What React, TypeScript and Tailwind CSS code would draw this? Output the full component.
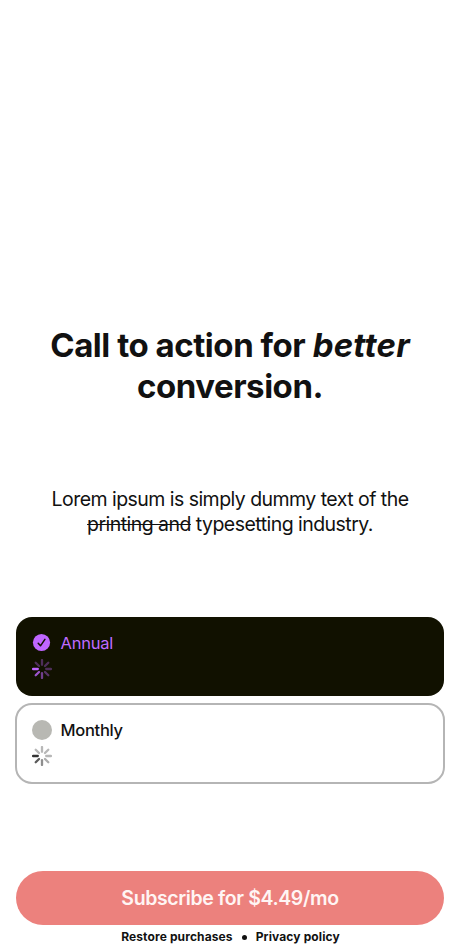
const rays = [0.35, 0.35, 0.35, 0.4, 0.55, 0.8, 1, 0.35];

function Spinner({ color }: { color: string }) {
  return (
    <svg width="20" height="20" viewBox="0 0 20 20" stroke={color} strokeWidth="2.3" strokeLinecap="round">
      {rays.map((o, i) => (
        <line key={i} x1="10" y1="1.1" x2="10" y2="5.8" opacity={o} transform={`rotate(${i * 45} 10 10)`} />
      ))}
    </svg>
  );
}

export default function App() {
  return (
    <main className="flex h-[950px] w-[460px] flex-col overflow-hidden bg-white px-4 font-['Inter',sans-serif] text-[#111]">
      <h1 className="mt-[325px] text-center text-[33px] leading-[41px] font-bold tracking-[-0.46px] whitespace-nowrap">
        Call to action for <em className="tracking-[0.2px]">better</em>
        <br />
        conversion.
      </h1>
      <p className="mt-[80px] text-center text-[19.5px] leading-[25px] tracking-[-0.54px] whitespace-nowrap">
        Lorem ipsum is simply dummy text of the
        <br />
        <s>printing and</s> typesetting industry.
      </p>
      <section className="mt-[80px] flex flex-col gap-[7px]">
        <div className="flex h-[79px] flex-col rounded-[16px] bg-[#111100] px-4 pt-4">
          <div className="flex h-5 items-center gap-[8.5px] text-[16.5px] tracking-[-0.25px] text-[#bf6bff]">
            <svg width="20" height="20" viewBox="0 0 20 20" fill="none">
              <circle cx="9.5" cy="9.5" r="8.6" fill="#bf66ff" />
              <path d="M6.2 10.2l2.3 2.6 4.4-6.4" stroke="#111100" strokeWidth="1.5" strokeLinecap="round" strokeLinejoin="round" />
            </svg>
            <span className="pt-px">Annual</span>
          </div>
          <div className="mt-[6px]"><Spinner color="#bf66ff" /></div>
        </div>
        <div className="-mx-px flex h-[81px] flex-col rounded-[17px] border-2 border-[#b5b5b5] px-[15px] pt-[15px]">
          <div className="flex h-5 items-center gap-[8.5px] text-[16.5px] font-medium tracking-[-0.28px]">
            <span className="h-5 w-5 rounded-full bg-[#b8b8b3]" />
            <span className="pt-px">Monthly</span>
          </div>
          <div className="mt-[6px]"><Spinner color="#333333" /></div>
        </div>
      </section>
      <button className="mt-[87px] h-[54px] shrink-0 rounded-[27px] bg-[#ec817d] pt-px text-[19.5px] font-semibold tracking-[-0.38px] text-[#fff5f4]">
        Subscribe for $4.49/mo
      </button>
      <footer className="mt-[3px] flex h-[17px] items-center justify-center gap-[9px] pl-px text-[12px] font-bold tracking-[0.12px]">
        <span>Restore purchases</span>
        <span className="mt-px h-[5px] w-[5px] rounded-full bg-[#111]" />
        <span>Privacy policy</span>
      </footer>
    </main>
  );
}
